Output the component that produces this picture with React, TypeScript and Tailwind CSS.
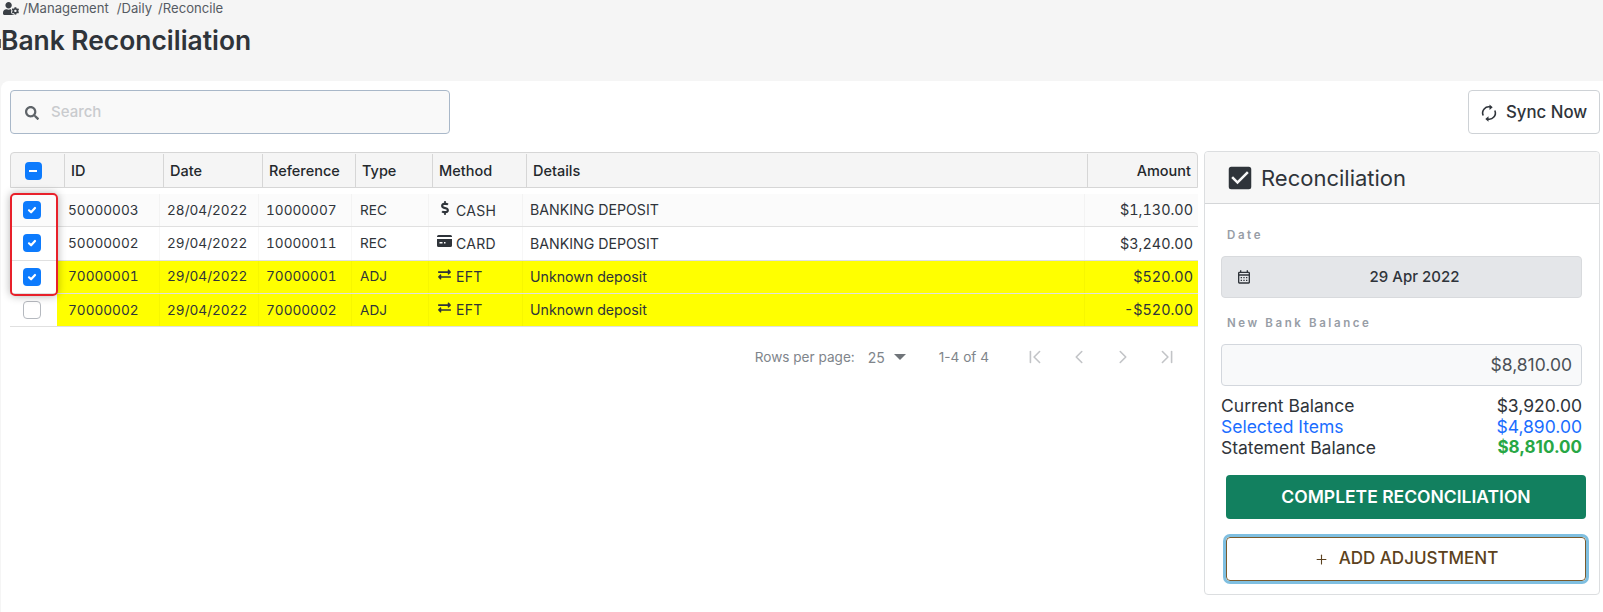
import { ChevronFirst, ChevronLast, ChevronLeft, ChevronRight, Plus } from 'lucide-react';
import { FaDollarSign, FaExchangeAlt, FaSearch, FaUserCog } from 'react-icons/fa';
import { MdCheckBox, MdOutlineCalendarMonth } from 'react-icons/md';
import { ReactNode } from 'react';

type Row = {
    id: string;
    date: string;
    reference: string;
    type: string;
    method: string;
    icon: ReactNode;
    details: string;
    amount: string;
    checked: boolean;
    highlight: boolean;
};

function CardIcon() {
    return (
        <svg className="w-[15px] h-[12px] -mt-1" viewBox="0 0 15 12" fill="currentColor">
            <path d="M1.5 0h12A1.5 1.5 0 0 1 15 1.5V2H0v-.5A1.5 1.5 0 0 1 1.5 0z" />
            <path fillRule="evenodd" d="M0 4h15v6.5a1.5 1.5 0 0 1-1.5 1.5h-12A1.5 1.5 0 0 1 0 10.5V4zm2.5 3v1.5h3V7h-3zm4.5 0v1.5h1.5V7H7z" />
        </svg>
    );
}

const dollar = <span className="flex justify-center w-[15px]"><FaDollarSign className="w-[12px] h-[14px] -mt-1" /></span>;
const exchange = <FaExchangeAlt className="w-[15px] h-[13px] -mt-1" />;

const rows: Row[] = [
    { id: '50000003', date: '28/04/2022', reference: '10000007', type: 'REC', method: 'CASH', icon: dollar, details: 'BANKING DEPOSIT', amount: '$1,130.00', checked: true, highlight: false },
    { id: '50000002', date: '29/04/2022', reference: '10000011', type: 'REC', method: 'CARD', icon: <CardIcon />, details: 'BANKING DEPOSIT', amount: '$3,240.00', checked: true, highlight: false },
    { id: '70000001', date: '29/04/2022', reference: '70000001', type: 'ADJ', method: 'EFT', icon: exchange, details: 'Unknown deposit', amount: '$520.00', checked: true, highlight: true },
    { id: '70000002', date: '29/04/2022', reference: '70000002', type: 'ADJ', method: 'EFT', icon: exchange, details: 'Unknown deposit', amount: '-$520.00', checked: false, highlight: true },
];

function Checkbox({ checked }: { checked: boolean }) {
    if (!checked) {
        return <span className="block w-[18px] h-[18px] rounded-[4px] border border-[#b5b9bf] bg-white" />;
    }
    return (
        <span className="flex items-center justify-center w-[18px] h-[18px] rounded-[4px] bg-[#0d7bfd]">
            <svg className="w-3 h-3" viewBox="0 0 12 12" fill="none" stroke="white" strokeWidth="2.2" strokeLinecap="round" strokeLinejoin="round">
                <path d="M3 6.3l2.1 2L9 4" />
            </svg>
        </span>
    );
}

export default function App() {
    return (
        <div className="h-[612px] overflow-hidden bg-[#f5f5f5] text-[#2f343a] font-['Inter','Liberation_Sans',sans-serif]">
            {/* Page heading */}
            <div className="relative h-[81px] pl-[3px]">
                <div className="flex items-center gap-[4px] h-[17px] text-[13.1px] text-[#555b63]">
                    <FaUserCog className="w-[16px] h-[13px] text-[#3a3f45]" />
                    <span>/Management</span>
                    <span className="ml-[4px]">/Daily</span>
                    <span className="ml-[2px]">/Reconcile</span>
                </div>
                <h1 className="mt-[8px] -ml-[2px] text-[26.4px] leading-[30px] font-semibold text-[#2f343a]">Bank Reconciliation</h1>
                <span className="absolute left-0 top-[39px] w-[1px] h-[9px] bg-[#666]" />
            </div>

            <div className="ml-[1px] h-[531px] bg-white rounded-tl-lg pl-[9px] pr-[3px] pt-[9px]">
                {/* Search + sync */}
                <div className="flex items-center justify-between h-[44px]">
                    <div className="flex items-center w-[440px] h-[44px] pl-[14px] pt-[1px] rounded border border-[#a9b8c9] bg-[#f9f9f9]">
                        <FaSearch className="w-[14px] h-[14px] text-[#5f6469]" />
                        <span className="ml-[12px] text-[15px] font-medium text-[#c9cbce]">Search</span>
                    </div>
                    <button className="flex items-center gap-[8px] w-[132px] h-[44px] pl-[11px] pt-[1px] rounded border border-[#ced2d6] bg-white text-[16.8px] font-medium text-[#2f343a]">
                        <svg className="w-[18px] h-[18px]" viewBox="0 0 18 18" fill="none" stroke="currentColor" strokeWidth="1.6">
                            <path d="M3.2 11.5A6.2 6.2 0 0 1 10.5 3" />
                            <path d="M14.8 6.5A6.2 6.2 0 0 1 7.5 15" />
                            <path d="M9.5 0.5l3.2 2.7-3.2 2.7z" fill="currentColor" stroke="none" />
                            <path d="M8.5 12.3l-3.2 2.7 3.2 2.7z" fill="currentColor" stroke="none" />
                        </svg>
                        Sync Now
                    </button>
                </div>

                <div className="flex gap-[6px] mt-[18px]">
                    {/* Table */}
                    <div className="relative w-[1188px]">
                        <div className="grid grid-cols-[54px_99px_99px_93px_77px_94px_561px_111px] h-[36px] pt-[1px] rounded-t border border-[#d6d6d6] bg-[#f5f5f5] text-[14.5px] font-medium text-[#24282c]">
                            <div className="flex items-center justify-center pr-[9px] border-r border-[#d6d6d6]">
                                <span className="flex items-center justify-center w-[17px] h-[18px] rounded-[4px] bg-[#0d7bfd]">
                                    <span className="w-[8px] h-[2px] bg-white" />
                                </span>
                            </div>
                            <div className="flex items-center pl-[6px] border-r border-[#d6d6d6]">ID</div>
                            <div className="flex items-center pl-[6px] border-r border-[#d6d6d6]">Date</div>
                            <div className="flex items-center pl-[6px] border-r border-[#d6d6d6]">Reference</div>
                            <div className="flex items-center pl-[6px] border-r border-[#d6d6d6]">Type</div>
                            <div className="flex items-center pl-[6px] border-r border-[#d6d6d6]">Method</div>
                            <div className="flex items-center pl-[6px] border-r border-[#d6d6d6]">Details</div>
                            <div className="flex items-center justify-end pr-[8px]">Amount</div>
                        </div>

                        <div className="mt-[6px] text-[13.6px] tabular-nums text-[#2f343a]">
                            {rows.map((row, i) => (
                                <div key={row.id} className={`grid grid-cols-[47px_1fr] h-[33.25px] border-b border-[#e0e0e0] ${i === 0 ? 'bg-[#fbfbfb]' : 'bg-white'}`}>
                                    <div className="flex items-center justify-start pl-[13px]">
                                        <Checkbox checked={row.checked} />
                                    </div>
                                    <div className={`grid grid-cols-[103px_99px_93px_77px_94px_562px_113px] ${row.highlight ? 'bg-[#ffff00]' : ''}`}>
                                        <div className="flex items-center pl-[11px] border-r border-black/[0.03]">{row.id}</div>
                                        <div className="flex items-center pl-[7px] border-r border-black/[0.03]">{row.date}</div>
                                        <div className="flex items-center pl-[7px] border-r border-black/[0.03]">{row.reference}</div>
                                        <div className="flex items-center pl-[8px] border-r border-black/[0.03]">{row.type}</div>
                                        <div className="flex items-center gap-[4px] pl-[8px] tracking-[0.3px] text-[14px] border-r border-black/[0.03]">
                                            {row.icon}
                                            {row.method}
                                        </div>
                                        <div className="flex items-center pl-[7px] text-[14.2px] border-r border-black/[0.03]">{row.details}</div>
                                        <div className="flex items-center justify-end pr-[5px] text-[14.4px]">{row.amount}</div>
                                    </div>
                                </div>
                            ))}
                        </div>

                        {/* Red selection box around the ticked rows */}
                        <div className="absolute left-0 top-[41px] w-[48px] h-[103px] rounded-[5px] border-2 border-[#e8202a] shadow-[0_0_8px_rgba(0,0,0,0.3)]" />

                        {/* Pagination */}
                        <div className="flex items-center justify-end h-[52px] mt-[4px] pr-[20px] text-[13.6px] text-[#80858b]">
                            <span>Rows per page:</span>
                            <span className="ml-[13px] text-[14px]">25</span>
                            <span className="ml-[9px] w-0 h-0 border-x-[6px] border-x-transparent border-t-[6px] border-t-[#6f7479]" />
                            <span className="ml-[33px]">1-4 of 4</span>
                            <div className="flex items-center gap-[22px] ml-[35px] text-[#c2c4c7]">
                                <ChevronFirst className="w-[22px] h-[22px]" strokeWidth={1.75} />
                                <ChevronLeft className="w-[22px] h-[22px]" strokeWidth={1.75} />
                                <ChevronRight className="w-[22px] h-[22px]" strokeWidth={1.75} />
                                <ChevronLast className="w-[22px] h-[22px]" strokeWidth={1.75} />
                            </div>
                        </div>
                    </div>

                    {/* Reconciliation panel */}
                    <div className="w-[396px] h-[444px] -mt-[1px] rounded border border-[#dcdee0] bg-white">
                        <div className="flex items-center gap-[6px] h-[52px] pl-[20px] pt-[1px] border-b border-[#d4d6d8] bg-[#f7f7f7] rounded-t">
                            <MdCheckBox className="w-[30px] h-[30px] text-[#2f343a]" />
                            <span className="text-[22px] leading-none text-[#2f343a]">Reconciliation</span>
                        </div>
                        <div className="pl-[16px] pr-[17px]">
                            <div className="pl-[6px] pt-[23px] h-[52px] text-[11.5px] font-semibold tracking-[2.6px] text-[#979da6]">Date</div>
                            <div className="flex items-center h-[42px] pl-[14px] rounded border border-[#d8dadd] bg-[#e4e6e9]">
                                <MdOutlineCalendarMonth className="w-[16px] h-[16px] text-[#2f343a]" />
                                <span className="flex-1 text-center text-[15px] font-medium pr-[4px]">29 Apr 2022</span>
                            </div>
                            <div className="pl-[6px] pt-[17px] h-[46px] text-[11.5px] font-semibold tracking-[2.6px] text-[#979da6]">New Bank Balance</div>
                            <div className="flex items-center justify-end h-[42px] pr-[9px] rounded border border-[#d3d7dd] bg-[#f8f9fa] text-[17.5px] text-[#4b5056]">$8,810.00</div>
                            <div className="mt-[9px] text-[17.5px] leading-[21px]">
                                <div className="flex justify-between">
                                    <span>Current Balance</span>
                                    <span>$3,920.00</span>
                                </div>
                                <div className="flex justify-between text-[#1a6dff]">
                                    <span>Selected Items</span>
                                    <span>$4,890.00</span>
                                </div>
                                <div className="flex justify-between">
                                    <span>Statement Balance</span>
                                    <span className="text-[17px] font-bold text-[#28a745]">$8,810.00</span>
                                </div>
                            </div>
                            <div className="w-[360px] ml-[5px] mt-[17px]">
                                <button className="w-full h-[44px] rounded bg-[#12805f] text-[17.5px] font-semibold text-white">COMPLETE RECONCILIATION</button>
                                <button className="flex items-center justify-center gap-[10px] w-full h-[44px] mt-[18px] rounded border border-[#7a5a2c] bg-white text-[17px] font-medium text-[#5c4220] outline-[3px] outline-[#7fbfe0] outline-offset-0">
                                    <Plus className="w-[15px] h-[15px]" strokeWidth={1.75} />
                                    ADD ADJUSTMENT
                                </button>
                            </div>
                        </div>
                    </div>
                </div>
            </div>
        </div>
    );
}
